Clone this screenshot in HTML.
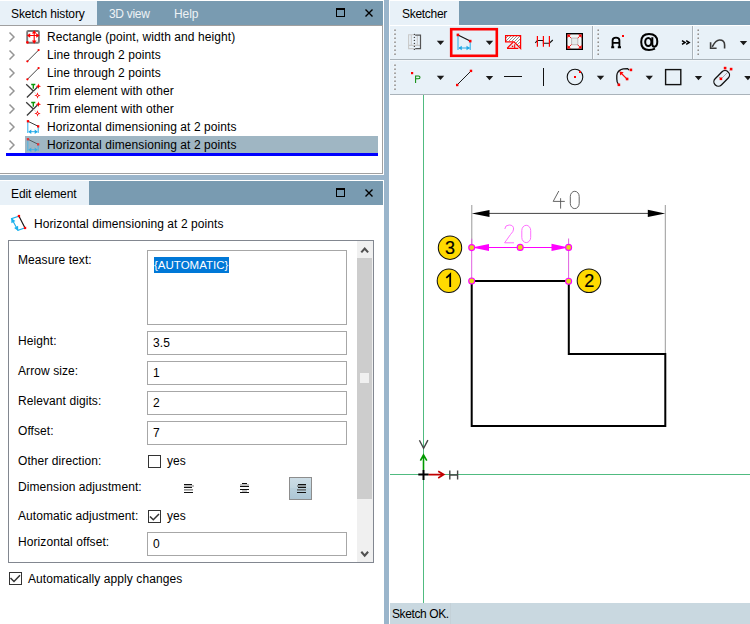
<!DOCTYPE html>
<html><head><meta charset="utf-8">
<style>
html,body{margin:0;padding:0}
body{width:750px;height:624px;overflow:hidden;position:relative;background:#fff;font-family:"Liberation Sans",sans-serif;font-size:12px;color:#000}
.a{position:absolute}
.t{position:absolute;white-space:nowrap;font-size:12px;line-height:14px;letter-spacing:0.08px}
.tabbar{position:absolute;background:#799bb1}
.tab{position:absolute;background:#e8f1f8}
.inact{color:#edf2f5}
.chev{position:absolute;left:9px;width:7px;height:10px}
.inp{position:absolute;left:147px;width:200px;height:24px;box-sizing:border-box;border:1px solid #a7a7a7;background:#fff}
.cb{position:absolute;width:13px;height:13px;box-sizing:border-box;border:1px solid #333;background:#fff}
svg{position:absolute;overflow:visible}
</style></head><body>

<!-- ============ LEFT: Sketch history ============ -->
<div class="tabbar" style="left:0;top:1px;width:383px;height:24px"></div>
<div class="tab" style="left:0;top:1px;width:97px;height:24px"></div>
<div class="t" style="left:11px;top:7px;letter-spacing:-0.12px">Sketch history</div>
<div class="t inact" style="left:109px;top:7px;letter-spacing:-0.3px">3D view</div>
<div class="t inact" style="left:174px;top:7px;letter-spacing:-0.1px">Help</div>
<div class="a" style="left:336px;top:8px;width:9px;height:9px;box-sizing:border-box;border:1px solid #000;border-top-width:2px"></div>
<svg style="left:0;top:0" width="750" height="30"><path d="M365.5 9.5L372.5 16.5M372.5 9.5L365.5 16.5" stroke="#000" stroke-width="1.4"/></svg>
<div class="a" style="left:0;top:25px;width:383px;height:1px;background:#a0a0a0"></div>
<div class="a" style="left:382px;top:26px;width:1px;height:148px;background:#a0a0a0"></div>
<div class="a" style="left:0;top:173px;width:383px;height:1px;background:#a0a0a0"></div>

<!-- selected row -->
<div class="a" style="left:25px;top:136px;width:353px;height:17px;background:#9fb6c3"></div>
<div class="a" style="left:6px;top:153px;width:372px;height:3px;background:#0000ff"></div>

<!-- chevrons -->
<svg style="left:0;top:0" width="30" height="160">
<g fill="none" stroke="#959595" stroke-width="1.45">
<path d="M9.5 32.5L14 37L9.5 41.5"/>
<path d="M9.5 50.5L14 55L9.5 59.5"/>
<path d="M9.5 68.5L14 73L9.5 77.5"/>
<path d="M9.5 86.5L14 91L9.5 95.5"/>
<path d="M9.5 104.5L14 109L9.5 113.5"/>
<path d="M9.5 122.5L14 127L9.5 131.5"/>
<path d="M9.5 140.5L14 145L9.5 149.5"/>
</g></svg>

<!-- list icons -->
<svg style="left:0;top:0" width="45" height="160">
<!-- rectangle icon -->
<rect x="27.2" y="31" width="11.7" height="11.7" rx="1" fill="none" stroke="#7a7a7a" stroke-width="1.9"/>
<path d="M28 35.5H38.5M34.2 32V42.5" stroke="#f00" stroke-width="1.1"/>
<path d="M26.8 35.5L30.2 33.2V37.8Z M39.6 35.5L36.2 33.2V37.8Z M34.2 30.3L31.9 33.6H36.5Z M34.2 43.7L31.9 40.4H36.5Z" fill="#f00"/>
<circle cx="27.4" cy="42.4" r="1.3" fill="#f00"/>
<!-- line icons -->
<path d="M27.6 61.1L38.5 50.2" stroke="#3a3a3a" stroke-width="0.95"/>
<circle cx="27.4" cy="61.3" r="1.15" fill="#f00"/><circle cx="38.6" cy="50.1" r="1.15" fill="#f00"/>
<path d="M27.6 79.1L38.5 68.2" stroke="#3a3a3a" stroke-width="0.95"/>
<circle cx="27.4" cy="79.3" r="1.15" fill="#f00"/><circle cx="38.6" cy="68.1" r="1.15" fill="#f00"/>
<!-- trim icons -->
<g>
<path d="M26.2 84.2L33.6 91.3M26.9 97.5L37.5 87" stroke="#3a3a3a" stroke-width="1.25" fill="none"/>
<path d="M33.6 91.3L39.6 97.5" stroke="#ccc" stroke-width="0.7"/>
<path d="M31.2 84.5H35.3M33.3 84.5V88.8" stroke="#0a960a" stroke-width="1.4"/>
<path d="M38.4 83.6L39.1 85.6L41.1 86.3L39.1 87L38.4 89L37.7 87L35.7 86.3L37.7 85.6Z" fill="#f00"/>
<path d="M37.5 92.3L38.3 94.7L40.7 95.5L38.3 96.3L37.5 98.7L36.7 96.3L34.3 95.5L36.7 94.7Z" fill="#f00"/>
<circle cx="37.5" cy="95.5" r="0.7" fill="#fff"/>
</g>
<g transform="translate(0,18)">
<path d="M26.2 84.2L33.6 91.3M26.9 97.5L37.5 87" stroke="#3a3a3a" stroke-width="1.25" fill="none"/>
<path d="M33.6 91.3L39.6 97.5" stroke="#ccc" stroke-width="0.7"/>
<path d="M31.2 84.5H35.3M33.3 84.5V88.8" stroke="#0a960a" stroke-width="1.4"/>
<path d="M38.4 83.6L39.1 85.6L41.1 86.3L39.1 87L38.4 89L37.7 87L35.7 86.3L37.7 85.6Z" fill="#f00"/>
<path d="M37.5 92.3L38.3 94.7L40.7 95.5L38.3 96.3L37.5 98.7L36.7 96.3L34.3 95.5L36.7 94.7Z" fill="#f00"/>
<circle cx="37.5" cy="95.5" r="0.7" fill="#fff"/>
</g>
<!-- dim icons -->
<g>
<path d="M28 121.3L38.2 126.3" stroke="#333" stroke-width="0.95"/>
<path d="M27.8 121.5V133M38.2 126.5V133" stroke="#3ab4ec" stroke-width="1.1"/>
<path d="M29 131.7H37" stroke="#2aaee8" stroke-width="1"/>
<path d="M28.2 131.7L31.3 129.4V134Z M37.8 131.7L34.7 129.4V134Z" fill="#1ea8e8"/>
<rect x="26.8" y="120.1" width="2.3" height="2.3" fill="#f00"/><rect x="37" y="125.2" width="2.3" height="2.3" fill="#f00"/>
</g>
<g transform="translate(0,18)" opacity="0.72">
<path d="M28 121.3L38.2 126.3" stroke="#333" stroke-width="0.95"/>
<path d="M27.8 121.5V133M38.2 126.5V133" stroke="#3ab4ec" stroke-width="1.1"/>
<path d="M29 131.7H37" stroke="#2aaee8" stroke-width="1"/>
<path d="M28.2 131.7L31.3 129.4V134Z M37.8 131.7L34.7 129.4V134Z" fill="#1ea8e8"/>
<rect x="26.8" y="120.1" width="2.3" height="2.3" fill="#f00"/><rect x="37" y="125.2" width="2.3" height="2.3" fill="#f00"/>
</g>
</svg>

<div class="t" style="left:47px;top:30px">Rectangle (point, width and height)</div>
<div class="t" style="left:47px;top:48px">Line through 2 points</div>
<div class="t" style="left:47px;top:66px">Line through 2 points</div>
<div class="t" style="left:47px;top:84px">Trim element with other</div>
<div class="t" style="left:47px;top:102px">Trim element with other</div>
<div class="t" style="left:47px;top:120px">Horizontal dimensioning at 2 points</div>
<div class="t" style="left:47px;top:138px">Horizontal dimensioning at 2 points</div>

<!-- horizontal splitter -->
<div class="a" style="left:0;top:175px;width:384px;height:5px;background:#9ab5cb"></div>

<!-- ============ LEFT: Edit element ============ -->
<div class="tabbar" style="left:0;top:181px;width:383px;height:24px"></div>
<div class="tab" style="left:0;top:181px;width:89px;height:24px"></div>
<div class="t" style="left:11px;top:187px;letter-spacing:-0.1px">Edit element</div>
<div class="a" style="left:336px;top:188px;width:9px;height:9px;box-sizing:border-box;border:1px solid #000;border-top-width:2px"></div>
<svg style="left:0;top:0" width="750" height="210"><path d="M365.5 189.5L372.5 196.5M372.5 189.5L365.5 196.5" stroke="#000" stroke-width="1.4"/></svg>

<!-- header -->
<svg style="left:0;top:0" width="40" height="240">
<path d="M19 216.3L24.9 227.8" stroke="#111" stroke-width="1.15"/>
<path d="M18.6 216.2L11.6 218.6L18 230.4L24.6 228" stroke="#1ab0ec" stroke-width="1.15" fill="none"/>
<path d="M11.2 217.9L11.4 223.3L15.4 221.1Z M18.3 231.1L14.1 227.9L18.1 225.7Z" fill="#1ab0ec"/>
<rect x="17.8" y="214.9" width="2.3" height="2.3" fill="#f00"/><rect x="23.9" y="226.8" width="2.3" height="2.3" fill="#f00"/>
</svg>
<div class="t" style="left:34px;top:217px">Horizontal dimensioning at 2 points</div>

<!-- scroll frame -->
<div class="a" style="left:8px;top:240px;width:366px;height:323px;box-sizing:border-box;border:1px solid #828790"></div>
<!-- scrollbar -->
<div class="a" style="left:357px;top:241px;width:16px;height:321px;background:#f0f0f0"></div>
<div class="a" style="left:357px;top:258px;width:15px;height:241px;background:#cdcdcd"></div>
<div class="a" style="left:360px;top:373px;width:9px;height:10px;background:#f0f0f0"></div>
<svg style="left:0;top:0" width="380" height="570">
<path d="M361.3 252.4L364.7 248.6L368.1 252.4" fill="none" stroke="#505050" stroke-width="2.1"/>
<path d="M361.3 551.8L364.7 555.6L368.1 551.8" fill="none" stroke="#505050" stroke-width="2.1"/>
</svg>

<div class="t" style="left:18px;top:253px">Measure text:</div>
<div class="a" style="left:147px;top:250px;width:200px;height:75px;box-sizing:border-box;border:1px solid #a7a7a7"></div>
<div class="a" style="left:154px;top:257px;width:75px;height:16px;background:#0078d7"></div>
<div class="t" style="left:154px;top:258px;color:#fff;font-size:11.5px;letter-spacing:0px">{AUTOMATIC}</div>

<div class="t" style="left:18px;top:334px">Height:</div>
<div class="inp" style="top:331px"></div>
<div class="t" style="left:153px;top:336px">3.5</div>

<div class="t" style="left:18px;top:364px">Arrow size:</div>
<div class="inp" style="top:361px"></div>
<div class="t" style="left:153px;top:366px">1</div>

<div class="t" style="left:18px;top:394px">Relevant digits:</div>
<div class="inp" style="top:391px"></div>
<div class="t" style="left:153px;top:396px">2</div>

<div class="t" style="left:18px;top:424px">Offset:</div>
<div class="inp" style="top:421px"></div>
<div class="t" style="left:153px;top:426px">7</div>

<div class="t" style="left:18px;top:454px">Other direction:</div>
<div class="cb" style="left:148px;top:455px"></div>
<div class="t" style="left:167px;top:454px">yes</div>

<div class="t" style="left:18px;top:480px">Dimension adjustment:</div>
<svg style="left:0;top:0" width="320" height="510">
<g stroke-width="1.2" fill="none">
<path d="M184 484.5H192M184 487.5H192M184 492.5H193" stroke="#111"/>
<path d="M184 486H194M184 489.8H193" stroke="#777"/>
</g>
<g stroke-width="1.2" fill="none">
<path d="M242 483.5H247M240 486.5H249M240 489.5H249M240 492.5H249" stroke="#111"/>
<path d="M240 485H249M242 491H247" stroke="#888"/>
</g>
<defs><linearGradient id="btng" x1="0" y1="0" x2="0" y2="1"><stop offset="0" stop-color="#cddde6"/><stop offset="0.45" stop-color="#c2d6e0"/><stop offset="0.5" stop-color="#b9d0dc"/><stop offset="1" stop-color="#adc6d5"/></linearGradient></defs>
<rect x="289.5" y="477.5" width="22" height="22" fill="url(#btng)" stroke="#8d8d8d" stroke-width="1"/>
<g stroke-width="1.2" fill="none">
<path d="M298 484.5H306M298 487.5H306M297 492.5H306" stroke="#111"/>
<path d="M297 486H306M297 489.8H306" stroke="#555"/>
</g>
</svg>

<div class="t" style="left:18px;top:509px">Automatic adjustment:</div>
<div class="cb" style="left:148px;top:510px"></div>
<div class="t" style="left:167px;top:509px">yes</div>

<div class="t" style="left:18px;top:535px">Horizontal offset:</div>
<div class="inp" style="top:532px"></div>
<div class="t" style="left:153px;top:537px">0</div>

<div class="cb" style="left:9px;top:572px"></div>
<div class="t" style="left:28px;top:572px">Automatically apply changes</div>
<svg style="left:0;top:0" width="200" height="600">
<path d="M150 516.5L153.3 519.8L159 514" fill="none" stroke="#333" stroke-width="1.5"/>
<path d="M10.5 578L14 581.5L20 575.3" fill="none" stroke="#333" stroke-width="1.5"/>
</svg>


<!-- ============ RIGHT ============ -->
<div class="a" style="left:384px;top:0;width:5px;height:624px;background:#9ab5cb"></div>

<div class="tabbar" style="left:390px;top:1px;width:360px;height:24px"></div>
<div class="tab" style="left:390px;top:1px;width:69px;height:24px"></div>
<div class="t" style="left:402px;top:7px;letter-spacing:-0.3px">Sketcher</div>

<!-- toolbars -->
<div class="a" style="left:390px;top:26px;width:360px;height:33px;background:#e8f1f8"></div>
<div class="a" style="left:390px;top:59px;width:360px;height:1px;background:#aab3ba"></div>
<div class="a" style="left:390px;top:60px;width:360px;height:1px;background:#f2f7fb"></div>
<div class="a" style="left:390px;top:61px;width:360px;height:33px;background:#e8f1f8"></div>
<div class="a" style="left:390px;top:94px;width:360px;height:1px;background:#aab3ba"></div>
<div class="a" style="left:592px;top:26px;width:1px;height:33px;background:#aab3ba"></div>
<div class="a" style="left:593px;top:26px;width:1px;height:33px;background:#f6fafd"></div>
<div class="a" style="left:692px;top:26px;width:1px;height:33px;background:#aab3ba"></div>
<div class="a" style="left:693px;top:26px;width:1px;height:33px;background:#f6fafd"></div>

<svg style="left:0;top:0" width="750" height="100">
<defs>
<g id="grip"><rect x="0" y="0" width="2" height="2" fill="#fff"/><rect x="0.6" y="0.6" width="1.6" height="1.6" fill="#8f8f8f"/></g>
<g id="grips"><use href="#grip" y="0"/><use href="#grip" y="4"/><use href="#grip" y="8"/><use href="#grip" y="12"/><use href="#grip" y="16"/><use href="#grip" y="20"/><use href="#grip" y="24"/></g>
<path id="dd" d="M0 0H7.4L3.7 4.2Z" fill="#1a1a1a"/>
</defs>
<use href="#grips" x="393.6" y="28.8"/>
<use href="#grips" x="596.8" y="28.8"/>
<use href="#grips" x="696.8" y="28.8"/>
<use href="#grips" x="393.6" y="63.8"/>

<!-- row1 icon1 -->
<g fill="none">
<path d="M414.5 34.8H408.6V48.6H414.5M411.3 35V45M417.3 36V45M409 45.4H420" stroke="#c9c9c9" stroke-width="1.1"/>
<path d="M415.2 35.2H420.5V48.6H415.2" stroke="#555" stroke-width="1.2"/>
</g>
<g fill="#444"><circle cx="414.4" cy="34.4" r="0.7"/><circle cx="414.4" cy="37.4" r="0.7"/><circle cx="414.4" cy="40.4" r="0.7"/><circle cx="414.4" cy="43.4" r="0.7"/><circle cx="414.4" cy="46.4" r="0.7"/><circle cx="414.4" cy="49.4" r="0.7"/></g>
<use href="#dd" x="436.8" y="40.8"/>

<!-- red highlight box -->
<rect x="451.2" y="29.2" width="45.6" height="26.6" fill="none" stroke="#ff0000" stroke-width="2.6"/>
<path d="M458 35L470.2 41" stroke="#111" stroke-width="1.1"/>
<path d="M458 35V50M470.2 41V50M459 48H469.5" stroke="#1aa6e6" stroke-width="0.95" fill="none"/>
<path d="M458.3 48L461.8 45.8V50.2Z M470 48L466.5 45.8V50.2Z" fill="#23a8e6"/>
<rect x="456.6" y="33.6" width="2.6" height="2.6" fill="#f00"/><rect x="468.9" y="39.8" width="2.6" height="2.6" fill="#f00"/>
<use href="#dd" x="485.8" y="40.8"/>

<!-- hatched icon -->
<path d="M506 36H520.3V48L514.2 41.8H506Z" fill="#fff"/>
<path d="M508 36L506 38M511 36L506 41M514 36L509 41M517 36L512 41M520 36L514.5 41.5M520 39L515.7 43.3M520 42L517.2 44.8M520 45L518.6 46.4" stroke="#777" stroke-width="0.8"/>
<path d="M505.6 35.6H520.6V48.4L514 41.8H505.6Z" fill="none" stroke="#f00" stroke-width="1.25"/>
<path d="M507 48.4H518.3M507.2 48.2L513.2 42.2M514.7 44.3V48.4" fill="none" stroke="#f00" stroke-width="1.1"/>
<rect x="511.8" y="45.6" width="1.5" height="1.5" fill="#f00"/>

<!-- HH icon -->
<path d="M535.3 42.8L537.4 40.5H543.4V43.2H549.4L552.8 40" fill="none" stroke="#111" stroke-width="1.1"/>
<path d="M537.4 36V46.8M543.4 36V46.8M549.4 36V46.8" stroke="#f00" stroke-width="1.2"/>

<!-- square icon -->
<rect x="566.7" y="33.7" width="15.6" height="15.6" fill="#f2f6f6" stroke="#000" stroke-width="1.4"/>
<rect x="571.6" y="38.1" width="6.2" height="6.6" fill="#e6ecec" stroke="#bdbdbd" stroke-width="1"/>
<path d="M568.8 35.8L571.2 38.2M580 35.8L577.8 38.2M568.8 47.2L571.5 44.5M580 47.2L577.6 44.7" stroke="#f00" stroke-width="0.9"/>
<path d="M567.4 34.4H571L567.4 38Z M581.6 34.4H578L581.6 38Z M567.4 48.6H571L567.4 45Z M581.6 48.6H578L581.6 45Z" fill="#f00"/>

<!-- A icon -->
<path d="M611.2 47.2H614.2M617.8 47.2H621M612.6 47.5V40.2Q612.6 37.6 616 37.6Q619.4 37.6 619.4 40.2V47.5M612.6 42.9H619.4" fill="none" stroke="#000" stroke-width="1.85"/>
<rect x="622" y="35" width="2" height="2" fill="#f00"/>

<!-- @ -->
<ellipse cx="648.3" cy="42" rx="3.1" ry="3.9" fill="none" stroke="#000" stroke-width="2"/>
<path d="M652.3 37.2V44.6Q652.3 46.7 654.3 46.7Q657.3 46.7 657.3 41.6Q657.3 34 649 34Q641.2 34 641.2 42Q641.2 50 649 50Q652 50 655 48.7" fill="none" stroke="#000" stroke-width="2"/>

<!-- >> -->
<path d="M682 40.6L685 42.5L682 44.4M686.2 40.6L689.2 42.5L686.2 44.4" fill="none" stroke="#000" stroke-width="1.5"/>

<!-- undo -->
<path d="M724.6 48.6V45Q724.6 40 719.5 40Q715.8 40 712.2 46.8" fill="none" stroke="#3a3a3a" stroke-width="1.6"/>
<path d="M710.6 42.2V48.3H716.6" fill="none" stroke="#3a3a3a" stroke-width="1.6"/>
<use href="#dd" x="739.8" y="41"/>

<!-- row 2 -->
<rect x="411" y="72" width="2.2" height="2.2" fill="#f00"/>
<path d="M415.6 83V75.9H418.5Q420 75.9 420 77.3Q420 78.7 418.5 78.7H415.6" fill="none" stroke="#0c8c0c" stroke-width="1.05"/>
<use href="#dd" x="436.8" y="75.8"/>
<path d="M457.2 84.8L471 71" stroke="#111" stroke-width="0.95"/>
<rect x="456" y="83.8" width="2.4" height="2.4" fill="#f00"/><rect x="469.8" y="69.7" width="2.4" height="2.4" fill="#f00"/>
<use href="#dd" x="485.8" y="76"/>
<path d="M504 76.5H522" stroke="#111" stroke-width="1.05"/>
<path d="M543.5 68V86" stroke="#111" stroke-width="1.05"/>
<circle cx="575" cy="77" r="7.8" fill="none" stroke="#111" stroke-width="1.1"/>
<rect x="574" y="76" width="2" height="2" fill="#f00"/><rect x="579" y="71" width="2" height="2" fill="#f00"/>
<use href="#dd" x="596.8" y="75.8"/>
<path d="M618.3 84Q616.8 82.5 616.8 79V75.5Q617.2 71.5 620.5 69.8Q622.5 68.6 627.5 68.6L629 70" fill="none" stroke="#111" stroke-width="1.3"/>
<path d="M626.8 78.8L620.5 72.5" stroke="#f00" stroke-width="1.1"/>
<path d="M619.6 71.6L623.6 72.2L620.3 75.4Z" fill="#f00"/>
<rect x="617.6" y="83.5" width="2.6" height="2.6" fill="#f00"/><rect x="625.8" y="77.7" width="2.6" height="2.6" fill="#f00"/><rect x="629.6" y="68.6" width="2.6" height="2.6" fill="#f00"/>
<use href="#dd" x="645.6" y="75.8"/>
<rect x="665.6" y="69.6" width="15.2" height="15" fill="none" stroke="#111" stroke-width="1.4"/>
<use href="#dd" x="694.8" y="76"/>
<g transform="rotate(-45 721.7 78.4)"><rect x="712.6" y="74" width="18.2" height="8.8" rx="4.2" ry="4.2" fill="none" stroke="#111" stroke-width="1.3"/></g>
<path d="M721 79L729.5 70.5M721 79L717.8 75.8" stroke="#999" stroke-width="0.8"/>
<rect x="719.6" y="77.5" width="2.6" height="2.6" fill="#f00"/><rect x="723.8" y="66.8" width="2.6" height="2.6" fill="#f00"/><rect x="729.8" y="67.8" width="2.6" height="2.6" fill="#f00"/>
<use href="#dd" x="744.2" y="76"/>
</svg>

<!-- canvas drawing -->
<svg style="left:0;top:0" width="750" height="624">
<path d="M423.5 95V603M390 474.5H750" stroke="#50bb80" stroke-width="1"/>
<!-- 40 dimension -->
<path d="M471.8 205V247M665.3 205V354" stroke="#999" stroke-width="1"/>
<path d="M489 213.4H648" stroke="#444" stroke-width="1"/>
<path d="M471.8 213.4L489.5 210V217Z M665.2 213.4L647.8 209.8V217Z" fill="#000"/>
<path d="M558.8 191L553.2 201.4H564.8M560.6 198.2V208.6" fill="none" stroke="#555" stroke-width="0.9"/>
<rect x="570.3" y="191.3" width="8.9" height="17.3" rx="4.45" ry="5.2" fill="none" stroke="#555" stroke-width="0.9"/>
<!-- rectangle L shape -->
<path d="M471.7 281V426H665.3V353.9H568.8V281Z" fill="none" stroke="#000" stroke-width="2"/>
<!-- pink dimension -->
<path d="M471.7 238.7V281M568.6 238.5V281" stroke="#e060e0" stroke-width="1"/>
<path d="M472 247.5H568" stroke="#ff00ff" stroke-width="1"/>
<path d="M472 247.5L489 244V251Z M568.5 247.5L551.5 243.8V251Z" fill="#ff00ff"/>
<path d="M504.8 229Q505 225 509.2 225Q513.6 225 513.6 229Q513.6 231.5 510.5 234.5L504.6 242.8H514" fill="none" stroke="#ff60ff" stroke-width="0.9"/>
<rect x="521.8" y="225.3" width="8.9" height="17.3" rx="4.45" ry="5.2" fill="none" stroke="#ff60ff" stroke-width="0.9"/>
<g fill="#e2d81a" stroke="#ff00ff" stroke-width="1.1">
<circle cx="471.7" cy="247.6" r="3.0"/><circle cx="520.2" cy="247.4" r="3.0"/><circle cx="568.6" cy="247.4" r="3.0"/>
<circle cx="471.7" cy="281" r="3.0"/><circle cx="568.6" cy="281.2" r="3.0"/>
</g>
<!-- numbered circles -->
<g fill="#ffda00" stroke="#111" stroke-width="1.05">
<circle cx="450" cy="247.7" r="11.7"/><circle cx="448.9" cy="280.8" r="11.7"/><circle cx="589" cy="280.7" r="11.8"/>
</g>
<g font-family="Liberation Sans" font-size="18" text-anchor="middle" fill="#000" stroke="#000" stroke-width="0.2">
<text x="450" y="253.8">3</text><text x="589.2" y="287">2</text>
</g>
<path d="M446.3 277.8L450.2 274.3V287" fill="none" stroke="#000" stroke-width="1.8"/>
<!-- origin -->
<path d="M418.3 474.6H428.6M423.5 469.9V480" stroke="#000" stroke-width="2"/>
<path d="M428.6 474.6H443.5M438.2 471.3L443.8 474.6L438.2 478" fill="none" stroke="#c00000" stroke-width="1.6"/>
<path d="M423.5 469.9V455M420.4 460.6L423.5 454.8L426.8 460.6" fill="none" stroke="#009900" stroke-width="1.6"/>
<path d="M419.4 440.2L423.6 448.3L427.9 440.2" fill="none" stroke="#444" stroke-width="1.4"/>
<path d="M449.8 470.4V479.5M457.6 470.4V479.5M449.8 475H457.6" fill="none" stroke="#444" stroke-width="1.4"/>
</svg>

<!-- status bar -->
<div class="a" style="left:390px;top:603px;width:360px;height:21px;background:#c9d8e0"></div>
<div class="a" style="left:450px;top:603px;width:1px;height:21px;background:#c4d1d8"></div>
<div class="t" style="left:392px;top:607px;letter-spacing:-0.4px">Sketch OK.</div>

</body></html>
